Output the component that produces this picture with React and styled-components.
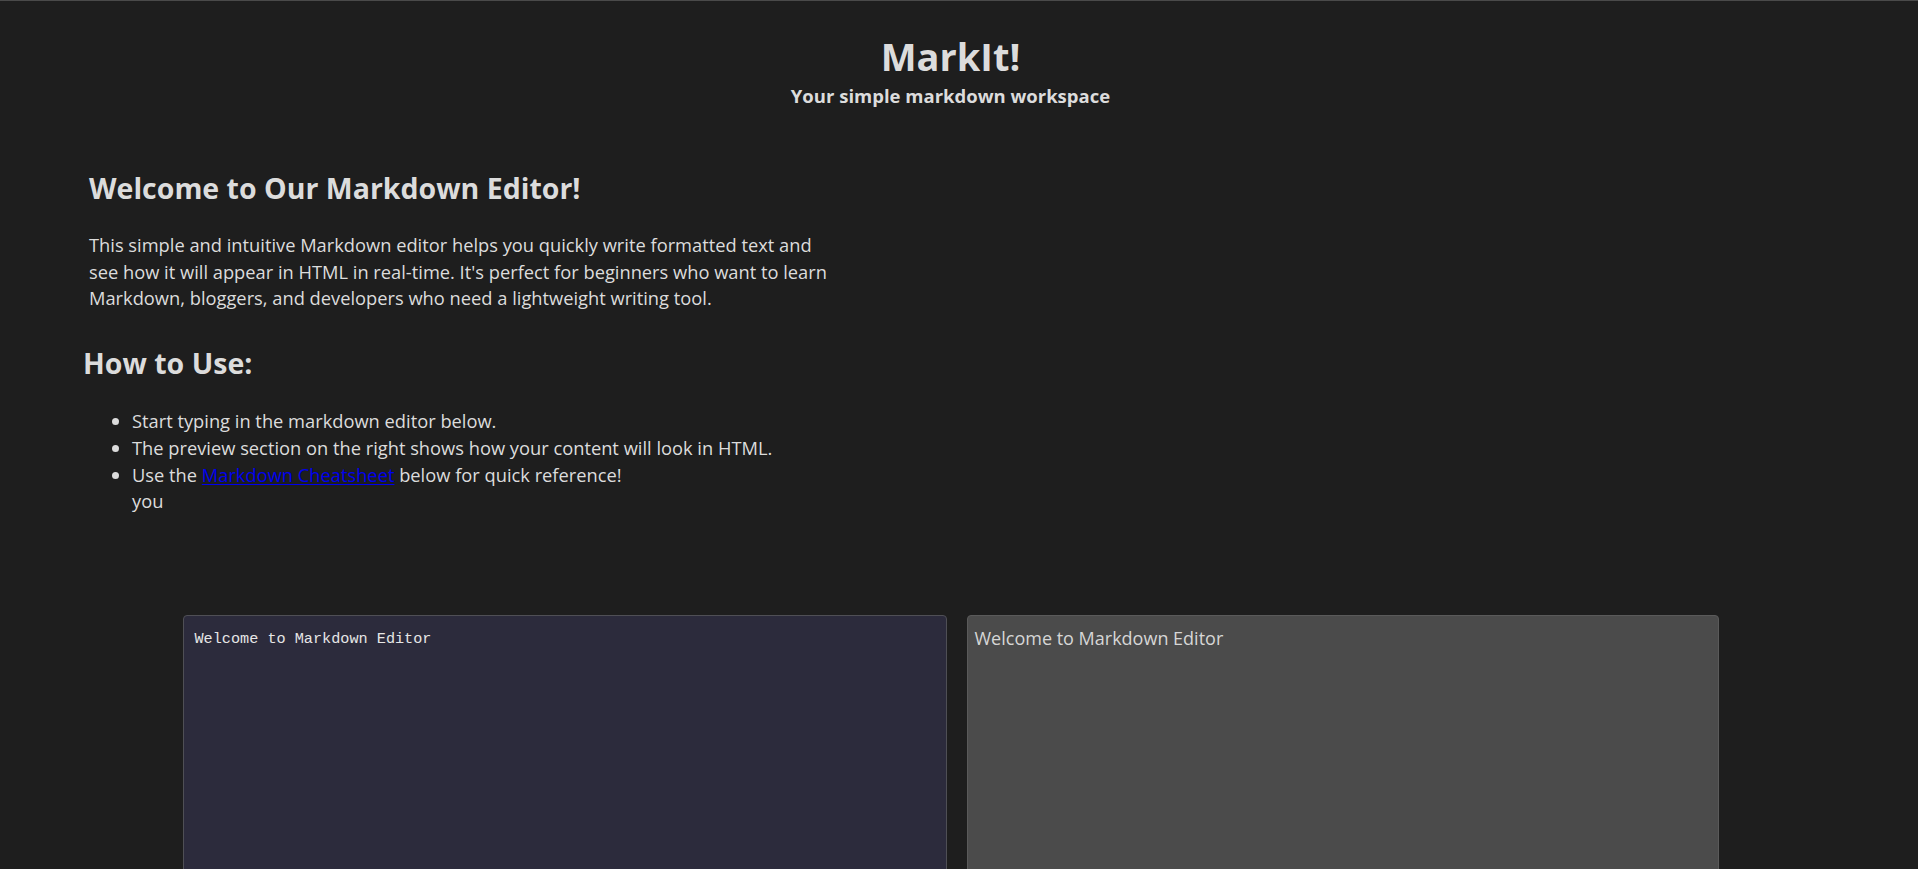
import React, { useState } from "react";
import styled, { createGlobalStyle } from "styled-components";

const GlobalStyle = createGlobalStyle`
  html {
    color-scheme: dark;
  }
  body {
    margin: 0;
    background: #1e1e1e;
    color: #dcdcdc;
    font-family: "Open Sans", "Noto Sans", sans-serif;
  }
`;

const Page = styled.div`
  border-top: 1px solid #4a4a4a;
  padding-right: 17px;
  padding-bottom: 120px;
`;

const Header = styled.header`
  display: flex;
  flex-direction: column;
  align-items: center;
  padding-top: 33px;
`;

const Title = styled.h1`
  margin: 0;
  font-size: 38px;
  line-height: 44px;
  font-weight: 700;
`;

const Subtitle = styled.h4`
  margin: 6px 0 0;
  font-size: 18.5px;
  line-height: 24px;
  font-weight: 700;
`;

const Intro = styled.section`
  padding: 0 0 0 89px;
  margin-top: 63px;
  width: 775px;
`;

const Heading = styled.h2`
  margin: 0 0 0 ${(p) => p.$shift || 0}px;
  font-size: 28.5px;
  line-height: 34px;
  font-weight: 700;
`;

const Text = styled.p`
  max-width: 748px;
  margin: 27px 0 34px;
  font-size: 18.3px;
  line-height: 26.7px;
`;

const List = styled.ul`
  margin: 28px 0 0;
  padding-left: 43px;
  font-size: 18.3px;
  line-height: 26.7px;
`;

const Link = styled.a`
  color: #0000ee;
  text-decoration: underline;
  text-underline-offset: 2px;
`;

const Workspace = styled.div`
  display: flex;
  justify-content: center;
  gap: 20px;
  margin-top: 100px;
`;

const Editor = styled.textarea`
  box-sizing: border-box;
  width: 764px;
  height: 520px;
  margin: 0;
  padding: 14px 11px 11px;
  background: #2c2b3c;
  color: #e6e6e6;
  border: 1px solid #4f4f55;
  border-radius: 4px;
  font-family: "Liberation Mono", monospace;
  font-size: 15.2px;
  line-height: 19px;
  resize: none;
  outline: none;
`;

const Preview = styled.div`
  box-sizing: border-box;
  width: 752px;
  height: 520px;
  padding: 9px 7px;
  background: #4b4b4b;
  color: #d6d6d6;
  border: 1px solid #5a5a5a;
  border-radius: 4px;
  font-size: 18px;
  line-height: 26px;
`;

export default function App() {
  const [text, setText] = useState("Welcome to Markdown Editor");

  return (
    <Page>
      <GlobalStyle />
      <Header>
        <Title>MarkIt!</Title>
        <Subtitle>Your simple markdown workspace</Subtitle>
      </Header>

      <Intro>
        <Heading>Welcome to Our Markdown Editor!</Heading>
        <Text>
          This simple and intuitive Markdown editor helps you quickly write
          formatted text and see how it will appear in HTML in real-time. It's
          perfect for beginners who want to learn Markdown, bloggers, and
          developers who need a lightweight writing tool.
        </Text>
        <Heading $shift={-6}>How to Use:</Heading>
        <List>
          <li>Start typing in the markdown editor below.</li>
          <li>The preview section on the right shows how your content will look in HTML.</li>
          <li>
            Use the <Link href="#cheatsheet">Markdown Cheatsheet</Link> below for quick reference!
            <br />
            you
          </li>
        </List>
      </Intro>

      <Workspace>
        <Editor value={text} onChange={(e) => setText(e.target.value)} spellCheck={false} />
        <Preview>{text}</Preview>
      </Workspace>
    </Page>
  );
}
